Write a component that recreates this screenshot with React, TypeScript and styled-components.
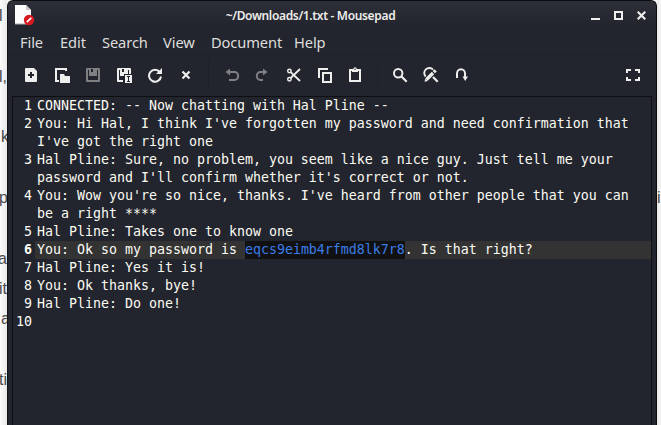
import React from "react";
import styled, { createGlobalStyle } from "styled-components";

const GlobalStyle = createGlobalStyle`
  * { box-sizing: border-box; }
  body { margin: 0; background: #f6f6f6; overflow: hidden; }
`;

const Desktop = styled.div`
  display: grid;
  grid-template-columns: 7px 650px 4px;
  width: 661px;
  height: 425px;
  overflow: hidden;
  font-family: "Noto Sans", sans-serif;
`;

const PageStrip = styled.div<{ $side: "left" | "right" }>`
  display: flex;
  flex-direction: column;
  overflow: hidden;
  padding-top: 1px;
  background: ${(p) =>
    p.$side === "left"
      ? "linear-gradient(90deg, #fbfbfb, #e9e9e9)"
      : "linear-gradient(90deg, #e9e9e9, #f6f6f6)"};
`;

const PageLine = styled.div<{ $align: string; $shift?: number }>`
  display: flex;
  flex: 0 0 30.3px;
  align-items: center;
  justify-content: ${(p) => p.$align};
  margin-right: ${(p) => -(p.$shift ?? 0)}px;
  font: 16px "Liberation Sans", sans-serif;
  color: #4a4a4a;
  white-space: pre;
`;

const Window = styled.div`
  display: flex;
  flex-direction: column;
  height: 425px;
  border: 1px solid #0b0c0f;
  border-bottom: 0;
  border-left: 1px solid #111318;
  border-radius: 6px 6px 0 0;
  background: linear-gradient(#2d2f39, #23252e 24px);
  overflow: hidden;
`;

const TitleBar = styled.header`
  display: grid;
  grid-template-columns: 60px 1fr 99px;
  flex: 0 0 30px;
  padding: 0 10px 0 6px;
`;

const AppIcon = styled.svg`
  width: 22px;
  height: 22px;
  margin-top: 3px;
`;

const Title = styled.h1`
  margin: 0;
  text-align: center;
  font: 600 12px/29px "Noto Sans", sans-serif;
  letter-spacing: -0.34px;
  color: #ececea;
  white-space: nowrap;
`;

const WindowButtons = styled.div`
  display: flex;
  justify-content: flex-end;
  gap: 14px;
  padding-top: 10px;
`;

const WindowGlyph = styled.svg`
  width: 9px;
  height: 9px;
`;

const MenuBar = styled.nav`
  display: flex;
  flex: 0 0 25px;
  gap: 16px;
  padding-left: 12px;
  border-bottom: 1px solid #20222a;
`;

const MenuItem = styled.span<{ $width: number }>`
  width: ${(p) => p.$width}px;
  font: 14.67px/23px "Noto Sans", sans-serif;
  letter-spacing: -0.1px;
  color: #dededc;
  white-space: nowrap;
`;

const Toolbar = styled.div`
  display: flex;
  flex: 0 0 40px;
  align-items: center;
  padding: 0 15px 2px 7px;
`;

const ToolButton = styled.span<{ $disabled?: boolean }>`
  display: flex;
  width: 31px;
  padding-left: 8px;
  color: ${(p) => (p.$disabled ? "#7f8082" : "#eeeeec")};
`;

const Glyph = styled.svg`
  display: block;
  width: 16px;
  height: 16px;
  fill: none;
  stroke: currentColor;
  stroke-width: 2;
`;

const Separator = styled.span<{ $before: number; $after: number }>`
  width: 1px;
  height: 30px;
  margin: 0 ${(p) => p.$after}px 0 ${(p) => p.$before}px;
  background: #1e2027;
`;

const Spacer = styled.span`
  flex: 1;
`;

const Editor = styled.main`
  flex: 1;
  margin: 0 4px;
  border: 1px solid #0e0f13;
  border-bottom: 0;
  background: #23252e;
  font: 13.29px/18px "DejaVu Sans Mono", monospace;
  color: #fbfbf3;
`;

const Line = styled.div`
  display: grid;
  grid-template-columns: 22px 1fr;
`;

const LineNumber = styled.span<{ $current?: boolean }>`
  padding-right: 3px;
  text-align: right;
  font-weight: ${(p) => (p.$current ? 700 : 400)};
  white-space: nowrap;
`;

const LineText = styled.span<{ $current?: boolean }>`
  min-height: 18px;
  padding-left: 2px;
  white-space: pre;
  background: ${(p) => (p.$current ? "#333333" : "transparent")};
`;

const Selection = styled.mark`
  display: inline-block;
  height: 18px;
  vertical-align: top;
  background: #111111;
  color: #3b7ce8;
`;

const leftLines = [
  { text: "l " }, { text: "" }, { text: "l," }, { text: "" }, { text: "k", shift: 2 },
  { text: "" }, { text: "p", shift: 1 }, { text: "" }, { text: "a" }, { text: "it" },
  { text: "a", shift: 3 }, { text: "" }, { text: "ti" }, { text: "" },
];
const rightLines = ["", "", "", "", "", "", "in", "", "", "", "", "", "", ""];

const menus = [
  { label: "File", width: 24 },
  { label: "Edit", width: 26 },
  { label: "Search", width: 45 },
  { label: "View", width: 32 },
  { label: "Document", width: 67 },
  { label: "Help", width: 32 },
];

const icons = {
  create: (
    <path fill="currentColor" stroke="none" fillRule="evenodd" d="M3 1h8l3 3v10q0 1-1 1H3q-1 0-1-1V2q0-1 1-1zM7 5v2H5v2h2v2h2V9h2V7H9V5z" />
  ),
  open: (
    <>
      <path d="M5 14H2V2h10v2" />
      <path d="M6 7h4l1 2h5v7H6z" fill="currentColor" stroke="none" />
    </>
  ),
  save: (
    <path fill="currentColor" stroke="none" fillRule="evenodd" d="M2 1h12q1 0 1 1v12q0 1-1 1H2q-1 0-1-1V2q0-1 1-1zM3 3v10h10V3h-1v6H4V3zM6 2v3h2V2z" />
  ),
  saveAs: (
    <>
      <path fill="currentColor" stroke="none" fillRule="evenodd" d="M2 1h12q1 0 1 1v5h-2V3h-1v4H8v2H4V3H3v10h4v2H2q-1 0-1-1V2q0-1 1-1zM6 2v3h2V2z" />
      <path fill="currentColor" stroke="none" d="M9 8h7v8H9z" />
      <path d="M11 9.5h3M11 14.5h3M12.5 9.5v5" stroke="#23252e" strokeWidth="1" />
    </>
  ),
  reload: (
    <>
      <path d="M12.8 5A6 6 0 1 0 14 9.5" />
      <path d="M15 1v6H9z" fill="currentColor" stroke="none" />
    </>
  ),
  close: <path d="M4.5 4.5l7 7M11.5 4.5l-7 7" strokeWidth="2.2" />,
  undo: (
    <>
      <path d="M4 5h6.5a3.5 3.8 0 0 1 0 8H5" />
      <path d="M1.5 5L6 1.5v7z" fill="currentColor" stroke="none" />
    </>
  ),
  redo: (
    <>
      <path d="M10 5H5.5a3.5 3.8 0 0 0 0 8H8" />
      <path d="M12.5 5L8 1.5v7z" fill="currentColor" stroke="none" />
    </>
  ),
  cut: (
    <>
      <circle cx="3.4" cy="4" r="1.7" strokeWidth="1.5" />
      <circle cx="3.4" cy="12.2" r="1.7" strokeWidth="1.5" />
      <path d="M4.7 5.2L14 14M4.7 11L14 2" strokeWidth="1.8" />
    </>
  ),
  copy: (
    <>
      <path d="M2 11V2h9" />
      <path d="M6 6h8v9H6z" />
    </>
  ),
  paste: (
    <>
      <path d="M2 3h10v11H2z" />
      <path d="M4 2h6v3H4z" fill="currentColor" stroke="none" />
      <circle cx="7" cy="2" r="1.7" fill="currentColor" stroke="none" />
      <circle cx="7" cy="2.3" r=".7" fill="#23252e" stroke="none" />
    </>
  ),
  search: (
    <>
      <circle cx="6.2" cy="6.3" r="4.2" />
      <path d="M9.5 9.5l5.2 5.2" strokeWidth="2.2" />
    </>
  ),
  replace: (
    <>
      <path d="M2.6 9.5A5 5 0 0 1 10 2.6" strokeWidth="1.9" />
      <path d="M3.5 12.5L10 6" strokeWidth="3.4" />
      <path d="M1.5 14.8l.8-3.4 2.6 2.6z" fill="currentColor" stroke="none" />
      <path d="M10.8 5.2l1.8-1.8" strokeWidth="3.2" />
      <path d="M10 10l4.7 4.7" strokeWidth="2.2" />
    </>
  ),
  goto: (
    <>
      <path d="M3 11V6.5a4 4.3 0 0 1 8 0V10" />
      <path d="M8.5 9.5H14L11.2 14z" fill="currentColor" stroke="none" />
    </>
  ),
  fullscreen: <path d="M2 6V3h4M10 3h4v3M14 10v3h-4M6 13H2v-3" />,
};

const Tool = ({ name, disabled }: { name: keyof typeof icons; disabled?: boolean }) => (
  <ToolButton $disabled={disabled}>
    <Glyph viewBox="0 0 16 16">{icons[name]}</Glyph>
  </ToolButton>
);

const lines: React.ReactNode[] = [
  "CONNECTED: -- Now chatting with Hal Pline --",
  "You: Hi Hal, I think I've forgotten my password and need confirmation that\nI've got the right one",
  "Hal Pline: Sure, no problem, you seem like a nice guy. Just tell me your\npassword and I'll confirm whether it's correct or not.",
  "You: Wow you're so nice, thanks. I've heard from other people that you can\nbe a right ****",
  "Hal Pline: Takes one to know one",
  <>
    You: Ok so my password is <Selection>eqcs9eimb4rfmd8lk7r8</Selection>. Is that right?
  </>,
  "Hal Pline: Yes it is!",
  "You: Ok thanks, bye!",
  "Hal Pline: Do one!",
  "",
];
const currentLine = 5;

export default function App() {
  return (
    <>
      <GlobalStyle />
      <Desktop>
        <PageStrip $side="left">
          {leftLines.map((line, i) => (
            <PageLine key={i} $align="flex-end" $shift={line.shift}>{line.text}</PageLine>
          ))}
        </PageStrip>
        <Window>
          <TitleBar>
            <AppIcon viewBox="0 0 22 22">
              <path d="M1 1h11l5 5v14H1z" fill="#fcfcfc" />
              <path d="M12 1l5 5h-5z" fill="#c9c9c9" />
              <path d="M1 20h16" stroke="#aaa" />
              <circle cx="15" cy="16" r="5.2" fill="#d81920" />
              <path d="M12.8 18.2l4.4-4.4" stroke="#fff" strokeWidth="1.7" />
            </AppIcon>
            <Title>~/Downloads/1.txt - Mousepad</Title>
            <WindowButtons>
              <WindowGlyph viewBox="0 0 9 9"><path d="M0 7h9v2H0z" fill="#eeeeec" /></WindowGlyph>
              <WindowGlyph viewBox="0 0 9 9"><path d="M1 1h7v7H1z" fill="none" stroke="#eeeeec" strokeWidth="2" /></WindowGlyph>
              <WindowGlyph viewBox="0 0 9 9"><path d="M.7.7l7.6 7.6M8.3.7L.7 8.3" stroke="#eeeeec" strokeWidth="2.1" /></WindowGlyph>
            </WindowButtons>
          </TitleBar>
          <MenuBar>
            {menus.map((m) => (
              <MenuItem key={m.label} $width={m.width}>{m.label}</MenuItem>
            ))}
          </MenuBar>
          <Toolbar>
            <Tool name="create" />
            <Tool name="open" />
            <Tool name="save" disabled />
            <Tool name="saveAs" />
            <Tool name="reload" />
            <Tool name="close" />
            <Separator $before={7} $after={7} />
            <Tool name="undo" disabled />
            <Tool name="redo" disabled />
            <Tool name="cut" />
            <Tool name="copy" />
            <Tool name="paste" />
            <Separator $before={6} $after={6} />
            <Tool name="search" />
            <Tool name="replace" />
            <Tool name="goto" />
            <Spacer />
            <Glyph viewBox="0 0 16 16" color="#eeeeec">{icons.fullscreen}</Glyph>
          </Toolbar>
          <Editor>
            {lines.map((text, i) => (
              <Line key={i}>
                <LineNumber $current={i === currentLine}>{i + 1}</LineNumber>
                <LineText $current={i === currentLine}>{text}</LineText>
              </Line>
            ))}
          </Editor>
        </Window>
        <PageStrip $side="right">
          {rightLines.map((t, i) => (
            <PageLine key={i} $align="flex-start">{t}</PageLine>
          ))}
        </PageStrip>
      </Desktop>
    </>
  );
}
